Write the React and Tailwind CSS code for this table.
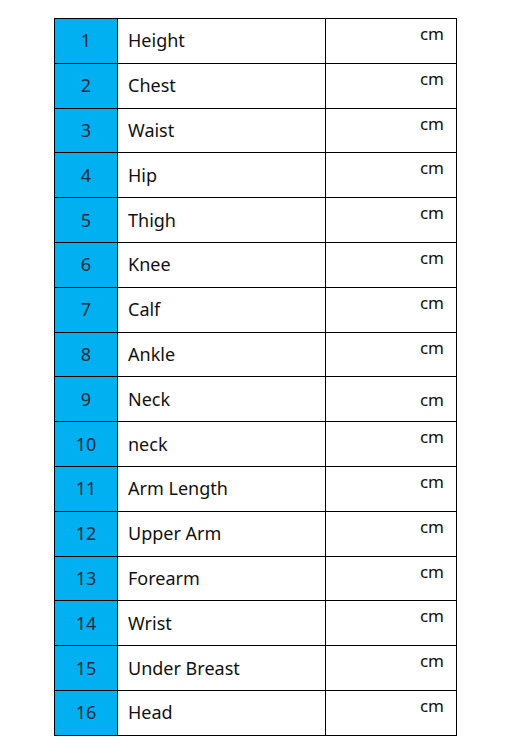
const rows = [
  'Height', 'Chest', 'Waist', 'Hip', 'Thigh', 'Knee', 'Calf', 'Ankle',
  'Neck', 'neck', 'Arm Length', 'Upper Arm', 'Forearm', 'Wrist', 'Under Breast', 'Head',
];

export default function App() {
  return (
    <div className="w-[514px] h-[753px] bg-white pt-[18px] pl-[54px]" style={{ fontFamily: '"Noto Sans", "Noto Sans CJK SC", sans-serif' }}>
      <table className="border-collapse text-[#111]">
        <tbody>
          {rows.map((label, i) => (
            <tr key={i} className="h-[44.8px]">
              <td className="w-[63px] border border-black bg-[#00b0f0] text-center text-[18px] text-[#1a2a3a] p-0">{i + 1}</td>
              <td className="w-[208px] border border-black pl-[10px] text-[18px] p-0">{label}</td>
              <td className={`w-[131px] border border-black text-right pr-[12px] text-[17px] ${i === 8 ? 'align-middle' : 'align-top pt-[2px]'}`}>cm</td>
            </tr>
          ))}
        </tbody>
      </table>
    </div>
  );
}
